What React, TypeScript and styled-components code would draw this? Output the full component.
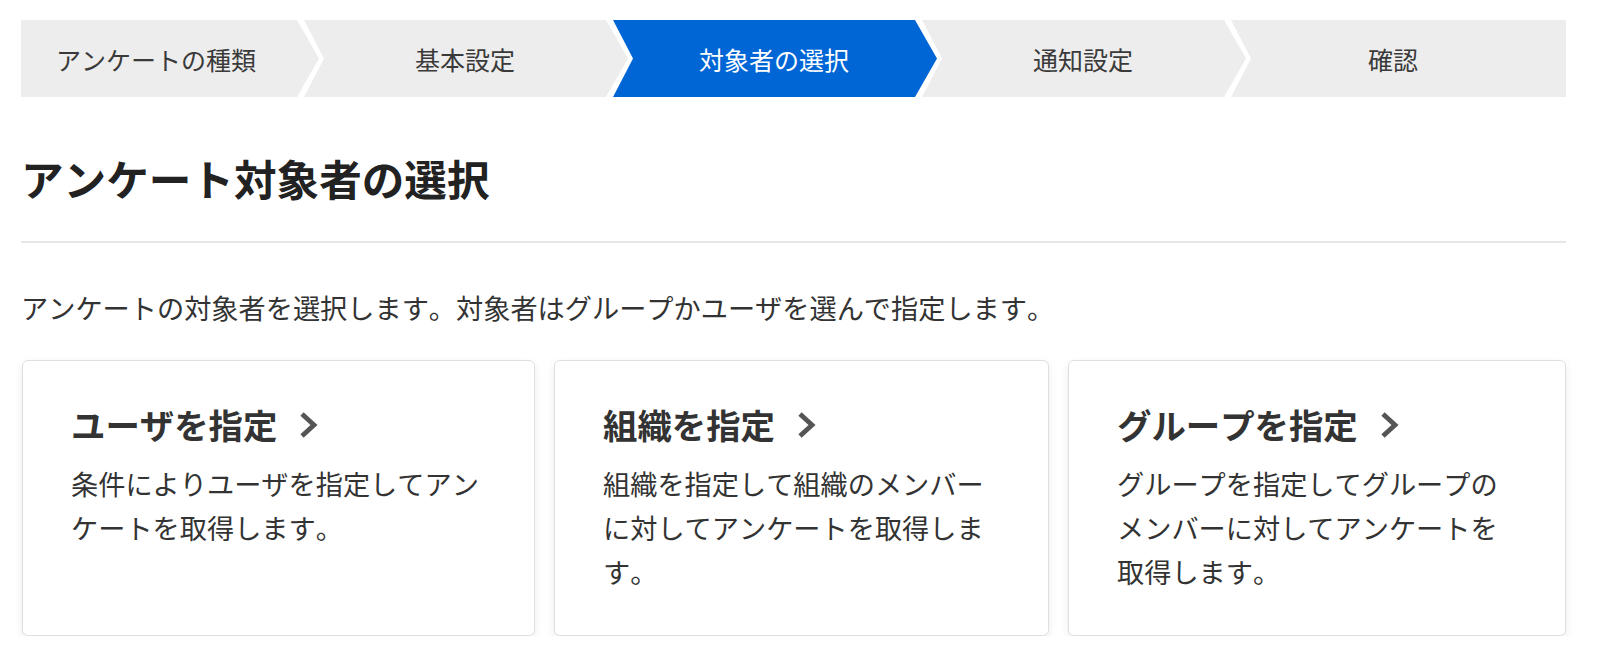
import React from "react";
import styled, { createGlobalStyle } from "styled-components";

const GlobalStyle = createGlobalStyle`
  html, body { margin: 0; padding: 0; background: #fff; }
  body {
    font-family: "Noto Sans CJK JP", "Noto Sans", sans-serif;
    font-kerning: none;
    color: #333;
  }
  * { box-sizing: border-box; }
`;

const Page = styled.div`
  padding: 20px 34px 0 21px;
`;

const Stepper = styled.ol`
  display: flex;
  list-style: none;
  margin: 0;
  padding: 0;
  height: 77px;
`;

type Pos = "first" | "middle" | "last";

const clips: Record<Pos, string> = {
  first: "polygon(0 0, 276px 0, 298px 50%, 276px 100%, 0 100%)",
  middle: "polygon(0 0, 302px 0, 324px 50%, 302px 100%, 0 100%, 20px 50%)",
  last: "polygon(0 0, 100% 0, 100% 100%, 0 100%, 20px 50%)",
};
const widths: Record<Pos, number> = { first: 298, middle: 324, last: 335 };
const pads: Record<Pos, string> = {
  first: "0 28px 0 0",
  middle: "0 22px 0 20px",
  last: "0 31px 0 20px",
};

const Step = styled.li<{ $pos: Pos; $active?: boolean }>`
  flex: none;
  width: ${(p) => widths[p.$pos]}px;
  margin-left: ${(p) => (p.$pos === "first" ? 0 : -15)}px;
  padding: ${(p) => pads[p.$pos]};
  display: flex;
  align-items: center;
  justify-content: center;
  background: ${(p) => (p.$active ? "#0066d5" : "#ededed")};
  color: ${(p) => (p.$active ? "#ffffff" : "#3a3a3a")};
  clip-path: ${(p) => clips[p.$pos]};
  font-size: 25px;
  white-space: nowrap;
`;

const Heading = styled.h1`
  margin: 51px 0 0;
  padding-bottom: 34px;
  border-bottom: 2px solid #e4e6ea;
  font-size: 42.6px;
  line-height: 59px;
  font-weight: 700;
  color: #222;
`;

const Lead = styled.p`
  margin: 44px 0 0;
  font-size: 27.2px;
  line-height: 40px;
  color: #333;
`;

const Cards = styled.div`
  display: grid;
  grid-template-columns: 513px 495px 498px;
  gap: 19px;
  margin: 33px 0 0 1px;
`;

const Card = styled.a`
  display: block;
  background: #fff;
  border: 1px solid #dce0e5;
  border-radius: 6px;
  box-shadow: 0 3px 8px rgba(0, 0, 0, 0.08);
  padding: 38px 30px 42px 48px;
  color: inherit;
  text-decoration: none;
  cursor: pointer;
`;

const CardTitle = styled.div`
  display: flex;
  align-items: center;
  gap: 22px;
  font-size: 34.4px;
  line-height: 51px;
  font-weight: 700;
  color: #333;
`;

const CardText = styled.p<{ $chars: number }>`
  margin: 11px 0 0;
  max-width: ${(p) => p.$chars + 0.5}em;
  font-size: 27.2px;
  line-height: 44px;
  color: #333;
`;

const Chevron = () => (
  <svg width="19" height="28" viewBox="0 0 19 28" aria-hidden="true">
    <polyline
      points="3,3 15,14 3,25"
      fill="none"
      stroke="#555"
      strokeWidth="4.8"
      strokeLinecap="butt"
      strokeLinejoin="miter"
    />
  </svg>
);

const steps: { label: string; pos: Pos; active?: boolean }[] = [
  { label: "アンケートの種類", pos: "first" },
  { label: "基本設定", pos: "middle" },
  { label: "対象者の選択", pos: "middle", active: true },
  { label: "通知設定", pos: "middle" },
  { label: "確認", pos: "last" },
];

const cards = [
  { title: "ユーザを指定", text: "条件によりユーザを指定してアンケートを取得します。", chars: 15 },
  { title: "組織を指定", text: "組織を指定して組織のメンバーに対してアンケートを取得します。", chars: 14 },
  { title: "グループを指定", text: "グループを指定してグループのメンバーに対してアンケートを取得します。", chars: 14 },
];

export default function App() {
  return (
    <>
      <GlobalStyle />
      <Page>
        <Stepper>
          {steps.map((s) => (
            <Step key={s.label} $pos={s.pos} $active={s.active}>
              {s.label}
            </Step>
          ))}
        </Stepper>
        <Heading>アンケート対象者の選択</Heading>
        <Lead>アンケートの対象者を選択します。対象者はグループかユーザを選んで指定します。</Lead>
        <Cards>
          {cards.map((c) => (
            <Card key={c.title}>
              <CardTitle>
                <span>{c.title}</span>
                <Chevron />
              </CardTitle>
              <CardText $chars={c.chars}>{c.text}</CardText>
            </Card>
          ))}
        </Cards>
      </Page>
    </>
  );
}
